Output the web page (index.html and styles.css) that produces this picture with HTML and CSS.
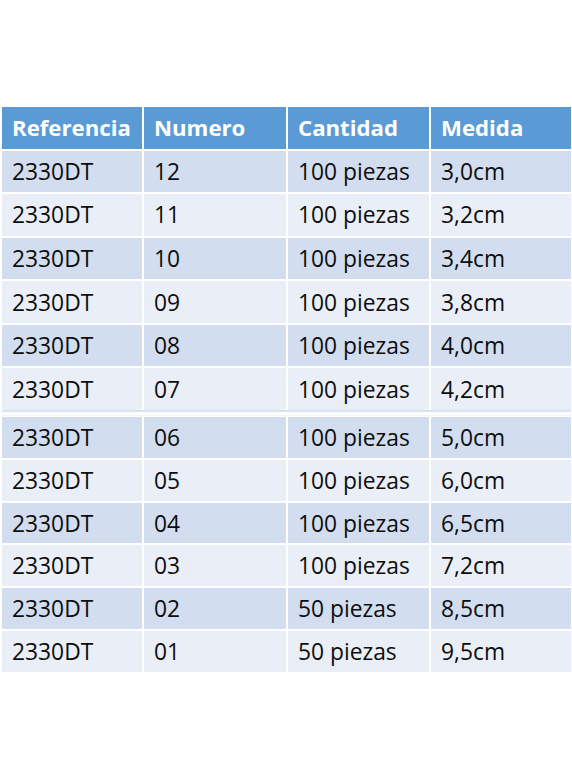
FILE: index.html
```html
<!DOCTYPE html>
<html lang="es">
<head>
<meta charset="utf-8">
<title>Tabla</title>
<link rel="stylesheet" href="styles.css">
</head>
<body>
<div class="sheet">
  <div class="grid top">
    <div class="cell head">Referencia</div>
    <div class="cell head">Numero</div>
    <div class="cell head">Cantidad</div>
    <div class="cell head">Medida</div>

    <div class="cell dark">2330DT</div><div class="cell dark">12</div><div class="cell dark">100 piezas</div><div class="cell dark">3,0cm</div>
    <div class="cell light">2330DT</div><div class="cell light">11</div><div class="cell light">100 piezas</div><div class="cell light">3,2cm</div>
    <div class="cell dark">2330DT</div><div class="cell dark">10</div><div class="cell dark">100 piezas</div><div class="cell dark">3,4cm</div>
    <div class="cell light">2330DT</div><div class="cell light">09</div><div class="cell light">100 piezas</div><div class="cell light">3,8cm</div>
    <div class="cell dark">2330DT</div><div class="cell dark">08</div><div class="cell dark">100 piezas</div><div class="cell dark">4,0cm</div>
    <div class="cell light">2330DT</div><div class="cell light">07</div><div class="cell light">100 piezas</div><div class="cell light">4,2cm</div>
  </div>
  <div class="break"><div class="line-a"></div><div class="line-b"></div></div>
  <div class="grid bottom">
    <div class="cell dark">2330DT</div><div class="cell dark">06</div><div class="cell dark">100 piezas</div><div class="cell dark">5,0cm</div>
    <div class="cell light">2330DT</div><div class="cell light">05</div><div class="cell light">100 piezas</div><div class="cell light">6,0cm</div>
    <div class="cell dark">2330DT</div><div class="cell dark">04</div><div class="cell dark">100 piezas</div><div class="cell dark">6,5cm</div>
    <div class="cell light">2330DT</div><div class="cell light">03</div><div class="cell light">100 piezas</div><div class="cell light">7,2cm</div>
    <div class="cell dark">2330DT</div><div class="cell dark">02</div><div class="cell dark">50 piezas</div><div class="cell dark">8,5cm</div>
    <div class="cell light">2330DT</div><div class="cell light">01</div><div class="cell light">50 piezas</div><div class="cell light">9,5cm</div>
  </div>
</div>
</body>
</html>
```

FILE: styles.css
```css
html, body {
  margin: 0;
  padding: 0;
  background: #ffffff;
}

.sheet {
  padding: 107px 1px 0 2px;
  width: 569px;
  font-family: "Open Sans", "Liberation Sans", sans-serif;
  font-size: 22.8px;
  color: #0d0d0d;
}

.grid {
  display: grid;
  grid-template-columns: 140px 142px 141px 140px;
  column-gap: 2px;
  row-gap: 2px;
}

.top {
  grid-template-rows: 41.5px repeat(6, 41.6px);
}

.bottom {
  grid-template-rows: repeat(6, 40.8px);
}

.cell {
  display: flex;
  align-items: center;
  padding-left: 10px;
  white-space: nowrap;
}

.head {
  background: #5b9bd5;
  color: #ffffff;
  font-weight: 700;
  font-size: 22.2px;
}

.dark {
  background: #d2deef;
}

.light {
  background: #eaeff7;
}

.break {
  height: 7px;
  display: flex;
  flex-direction: column;
}

.line-a {
  height: 2px;
  background: #d8e3f1;
}

.line-b {
  margin-top: 3px;
  height: 1px;
  background: #f1f5fa;
}
```
